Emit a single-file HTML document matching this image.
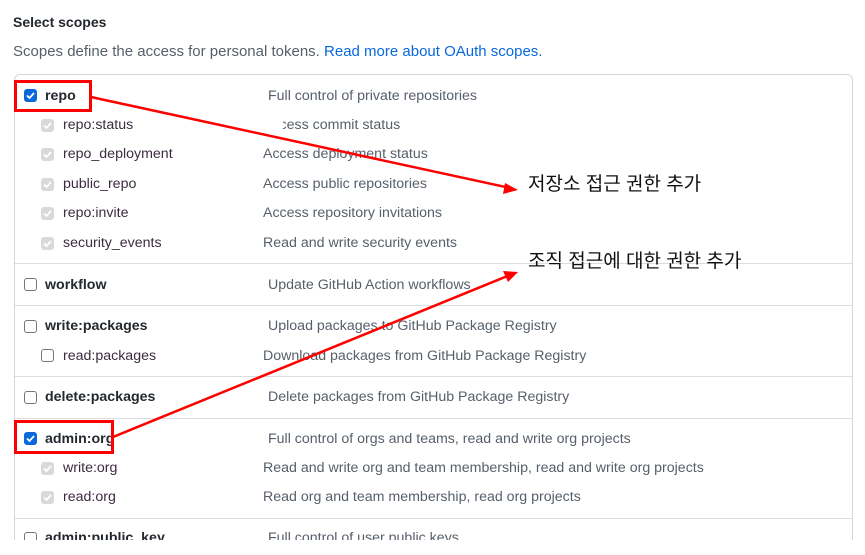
<!DOCTYPE html>
<html style="width:865px;height:555px;overflow:hidden"><head><meta charset="utf-8"><style>
*{margin:0;padding:0;box-sizing:border-box}
body{width:865px;height:555px;background:#fff;position:relative;overflow:hidden;font-family:"Liberation Sans","Noto Sans CJK KR",sans-serif;font-size:14.2px;color:#24292f}
.a{position:absolute;white-space:nowrap}
.box{position:absolute;left:14px;top:74px;width:839px;height:480px;border:1px solid #d0d7de;border-radius:6px}
.sep{position:absolute;left:15px;width:837px;height:1px;background:#d8dee4}
.cb{position:absolute;width:13px;height:13px;border:1px solid #767676;border-radius:3px;background:#fff}
.cb.on{background:#0969da;border-color:#0969da}
.cb.dis{background:#d9d9d9;border-color:#d9d9d9}
.cb svg{position:absolute;left:0px;top:0px}
.t{font-weight:bold;color:#24292f}
.c{color:#3d2b40}
.d{color:#57606a}
.red{position:absolute;border:3px solid #f00}
.k{font-size:19px;color:#111}
</style></head><body>
<div class="a t" style="left:13px;top:14px;font-size:14px">Select scopes</div>
<div class="a d" style="left:13px;top:43px;font-size:15px;color:#57606a">Scopes define the access for personal tokens. <span style="color:#0969da">Read more about OAuth scopes.</span></div>
<div class="box"></div>
<div class="sep" style="top:263px"></div>
<div class="sep" style="top:305px"></div>
<div class="sep" style="top:376px"></div>
<div class="sep" style="top:418px"></div>
<div class="sep" style="top:518px"></div>

<div class="cb on" style="left:24px;top:89px"><svg width="11" height="11" viewBox="0 0 11 11"><path d="M2 5.5l2.5 2.5 4.5-5" stroke="#fff" stroke-width="1.8" fill="none"/></svg></div>
<div class="a t" style="left:45px;top:88px">repo</div>
<div class="a d" style="left:268px;top:88px">Full control of private repositories</div>

<div class="cb dis" style="left:41px;top:119px"><svg width="11" height="11" viewBox="0 0 11 11"><path d="M2 5.5l2.5 2.5 4.5-5" stroke="#fff" stroke-width="1.8" fill="none"/></svg></div>
<div class="a c" style="left:63px;top:117px">repo:status</div>
<div class="a d" style="left:263px;top:117px">Access commit status</div>
<div class="a" style="left:262px;top:115px;width:21px;height:20px;background:#fff"></div>

<div class="cb dis" style="left:41px;top:148px"><svg width="11" height="11" viewBox="0 0 11 11"><path d="M2 5.5l2.5 2.5 4.5-5" stroke="#fff" stroke-width="1.8" fill="none"/></svg></div>
<div class="a c" style="left:63px;top:146px">repo_deployment</div>
<div class="a d" style="left:263px;top:146px">Access deployment status</div>

<div class="cb dis" style="left:41px;top:178px"><svg width="11" height="11" viewBox="0 0 11 11"><path d="M2 5.5l2.5 2.5 4.5-5" stroke="#fff" stroke-width="1.8" fill="none"/></svg></div>
<div class="a c" style="left:63px;top:176px">public_repo</div>
<div class="a d" style="left:263px;top:176px">Access public repositories</div>

<div class="cb dis" style="left:41px;top:207px"><svg width="11" height="11" viewBox="0 0 11 11"><path d="M2 5.5l2.5 2.5 4.5-5" stroke="#fff" stroke-width="1.8" fill="none"/></svg></div>
<div class="a c" style="left:63px;top:205px">repo:invite</div>
<div class="a d" style="left:263px;top:205px">Access repository invitations</div>

<div class="cb dis" style="left:41px;top:237px"><svg width="11" height="11" viewBox="0 0 11 11"><path d="M2 5.5l2.5 2.5 4.5-5" stroke="#fff" stroke-width="1.8" fill="none"/></svg></div>
<div class="a c" style="left:63px;top:235px">security_events</div>
<div class="a d" style="left:263px;top:235px">Read and write security events</div>

<div class="cb" style="left:24px;top:278px"></div>
<div class="a t" style="left:45px;top:277px">workflow</div>
<div class="a d" style="left:268px;top:277px">Update GitHub Action workflows</div>

<div class="cb" style="left:24px;top:320px"></div>
<div class="a t" style="left:45px;top:318px">write:packages</div>
<div class="a d" style="left:268px;top:318px">Upload packages to GitHub Package Registry</div>

<div class="cb" style="left:41px;top:349px"></div>
<div class="a c" style="left:63px;top:348px">read:packages</div>
<div class="a d" style="left:263px;top:348px">Download packages from GitHub Package Registry</div>

<div class="cb" style="left:24px;top:391px"></div>
<div class="a t" style="left:45px;top:389px">delete:packages</div>
<div class="a d" style="left:268px;top:389px">Delete packages from GitHub Package Registry</div>

<div class="cb on" style="left:24px;top:432px"><svg width="11" height="11" viewBox="0 0 11 11"><path d="M2 5.5l2.5 2.5 4.5-5" stroke="#fff" stroke-width="1.8" fill="none"/></svg></div>
<div class="a t" style="left:45px;top:431px">admin:org</div>
<div class="a d" style="left:268px;top:431px">Full control of orgs and teams, read and write org projects</div>

<div class="cb dis" style="left:41px;top:462px"><svg width="11" height="11" viewBox="0 0 11 11"><path d="M2 5.5l2.5 2.5 4.5-5" stroke="#fff" stroke-width="1.8" fill="none"/></svg></div>
<div class="a c" style="left:63px;top:460px">write:org</div>
<div class="a d" style="left:263px;top:460px">Read and write org and team membership, read and write org projects</div>

<div class="cb dis" style="left:41px;top:491px"><svg width="11" height="11" viewBox="0 0 11 11"><path d="M2 5.5l2.5 2.5 4.5-5" stroke="#fff" stroke-width="1.8" fill="none"/></svg></div>
<div class="a c" style="left:63px;top:489px">read:org</div>
<div class="a d" style="left:263px;top:489px">Read org and team membership, read org projects</div>

<div class="cb" style="left:24px;top:532px"></div>
<div class="a t" style="left:45px;top:530px">admin:public_key</div>
<div class="a d" style="left:268px;top:530px">Full control of user public keys</div>
<div class="a" style="left:0;top:540px;width:865px;height:20px;background:#fff"></div>

<div class="red" style="left:14px;top:80px;width:78px;height:32px"></div>
<div class="red" style="left:14px;top:420px;width:100px;height:34px"></div>
<svg class="a" style="left:0;top:0" width="865" height="555">
<line x1="91" y1="97" x2="510" y2="188" stroke="#f00" stroke-width="2.5"/>
<polygon points="518,190 505,183 503,194" fill="#f00"/>
<line x1="113" y1="437" x2="510" y2="275" stroke="#f00" stroke-width="2.5"/>
<polygon points="518,272 503,271 508,282" fill="#f00"/>
</svg>
<div class="a k" style="left:528px;top:169px">저장소 접근 권한 추가</div>
<div class="a k" style="left:528px;top:246px">조직 접근에 대한 권한 추가</div>
</body></html>
